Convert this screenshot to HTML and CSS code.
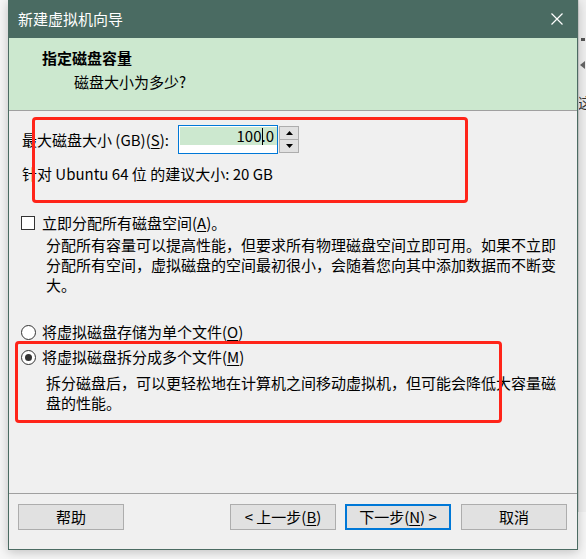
FILE: index.html
```html
<!DOCTYPE html>
<html lang="zh-CN">
<head>
<meta charset="utf-8">
<title>新建虚拟机向导</title>
<link rel="stylesheet" href="styles.css">
</head>
<body>
<div class="desk">
  <div class="bgwin">
    <span class="bg-dash"></span>
    <span class="bg-arrow"></span>
    <span class="bg-char">这</span>
  </div>
  <div class="window">
    <div class="titlebar">
      <span class="title">新建虚拟机向导</span>
      <svg class="close" width="12" height="12" viewBox="0 0 12 12"><path d="M0.5 0.5 L11.5 11.5 M11.5 0.5 L0.5 11.5" stroke="#ffffff" stroke-width="1.2" fill="none"/></svg>
    </div>
    <div class="header">
      <div class="h-title">指定磁盘容量</div>
      <div class="h-sub">磁盘大小为多少?</div>
    </div>
    <div class="content">
      <div class="size-row">
        <span class="size-label">最大磁盘大小 (GB)(<u>S</u>):</span>
        <div class="field"><span class="sel">100<i class="caret"></i>.0</span></div>
        <div class="spinner">
          <span class="spin-btn"><svg width="7" height="4" viewBox="0 0 7 4"><path d="M3.5 0 L7 4 L0 4 Z" fill="#000"/></svg></span>
          <span class="spin-btn"><svg width="7" height="4" viewBox="0 0 7 4"><path d="M0 0 L7 0 L3.5 4 Z" fill="#000"/></svg></span>
        </div>
      </div>
      <div class="rec">针对 Ubuntu 64 位 的建议大小: 20 GB</div>
      <div class="check-row"><span class="checkbox"></span><span>立即分配所有磁盘空间(<u>A</u>)。</span></div>
      <div class="desc desc1">分配所有容量可以提高性能，但要求所有物理磁盘空间立即可用。如果不立即<br>分配所有空间，虚拟磁盘的空间最初很小，会随着您向其中添加数据而不断变<br>大。</div>
      <div class="radio-row radio1"><span class="radio"></span><span>将虚拟磁盘存储为单个文件(<u>O</u>)</span></div>
      <div class="radio-row radio2"><span class="radio checked"></span><span>将虚拟磁盘拆分成多个文件(<u>M</u>)</span></div>
      <div class="desc desc2">拆分磁盘后，可以更轻松地在计算机之间移动虚拟机，但可能会降低大容量磁<br>盘的性能。</div>
      <div class="mark mark1"></div>
      <div class="mark mark2"></div>
    </div>
    <div class="footer">
      <span class="btn">帮助</span>
      <span class="btn btn-back">&lt; 上一步(<u>B</u>)</span>
      <span class="btn btn-next">下一步(<u>N</u>) &gt;</span>
      <span class="btn btn-cancel">取消</span>
    </div>
  </div>
</div>
</body>
</html>
```

FILE: styles.css
```css
html, body {
  margin: 0;
  padding: 0;
}
body {
  background: #f6f6f6;
  font-family: "Noto Sans CJK SC", "Noto Sans", sans-serif;
  font-size: 15px;
  color: #000;
  width: 586px;
  height: 559px;
  overflow: hidden;
}
.desk {
  position: relative;
  width: 586px;
  height: 559px;
}
.bgwin {
  position: absolute;
  left: 578px;
  top: 0;
  width: 30px;
  height: 512px;
  background: #efefef;
  border-left: 1px solid #d6d6d6;
  overflow: hidden;
}
.bgwin::before {
  content: "";
  position: absolute;
  left: 7px;
  top: 0;
  width: 1px;
  height: 512px;
  background: #c8c8c8;
}
.bg-dash {
  position: absolute;
  left: 2px;
  top: 38px;
  width: 4px;
  height: 3px;
  background: #555;
}
.bg-arrow {
  position: absolute;
  left: 1px;
  top: 61px;
  width: 0;
  height: 0;
  border-top: 4px solid transparent;
  border-bottom: 4px solid transparent;
  border-right: 5px solid #666;
}
.bg-char {
  position: absolute;
  left: -1px;
  top: 93px;
  font-size: 14px;
  line-height: 18px;
  color: #333;
}
.window {
  position: relative;
  margin-left: 8px;
  width: 570px;
  height: 550px;
  box-sizing: border-box;
  border: 1px solid #4b6b62;
  border-top: none;
  background: #f0f0f0;
  display: flex;
  flex-direction: column;
  box-shadow: 0 2px 10px rgba(0, 0, 0, 0.22);
}
.titlebar {
  height: 38px;
  background: #4a6b62;
  display: flex;
  align-items: center;
  padding: 0 14px 0 9px;
  flex-shrink: 0;
}
.title {
  color: #fff;
  font-size: 15px;
  line-height: 20px;
  flex: 1;
}
.close {
  display: block;
  margin-top: -1px;
}
.header {
  height: 62px;
  background: #cce8cf;
  border-bottom: 1px solid #a0a0a0;
  flex-shrink: 0;
  padding: 10px 0 0 33px;
  box-sizing: content-box;
}
.h-title {
  font-weight: bold;
  line-height: 20px;
}
.h-sub {
  line-height: 20px;
  margin-top: 4px;
  padding-left: 32px;
}
.content {
  position: relative;
  flex: 1;
  padding: 14px 0 0 13px;
  display: flex;
  flex-direction: column;
  align-items: flex-start;
}
.size-row {
  display: flex;
  align-items: center;
  height: 29px;
}
.size-label {
  width: 156px;
  line-height: 20px;
  flex-shrink: 0;
}
u {
  text-decoration: underline;
  text-underline-offset: 2px;
}
.field {
  width: 100px;
  height: 29px;
  box-sizing: border-box;
  border: 1px solid #0078d7;
  background: #fff;
  padding: 1px 0 0 1px;
}
.sel {
  display: block;
  width: 97px;
  height: 18px;
  background: #cce8cf;
  text-align: right;
  line-height: 18px;
  padding-right: 3px;
  box-sizing: border-box;
}
.caret {
  display: inline-block;
  width: 1px;
  height: 17px;
  background: #000;
  vertical-align: -3px;
  margin: 0 -1px 0 0;
}
.spinner {
  display: flex;
  flex-direction: column;
  width: 20px;
  height: 27px;
  margin-left: 1px;
}
.spin-btn {
  flex: 1;
  background: #e1e1e1;
  border: 1px solid #adadad;
  display: flex;
  align-items: center;
  justify-content: center;
}
.spin-btn + .spin-btn {
  border-top: none;
}
.spin-btn svg {
  display: block;
}
.rec {
  line-height: 20px;
  margin-top: 10px;
}
.check-row {
  display: flex;
  align-items: center;
  line-height: 20px;
  margin-top: 29px;
  margin-left: -1px;
}
.checkbox {
  width: 14px;
  height: 14px;
  box-sizing: border-box;
  border: 1px solid #333;
  background: #fff;
  margin-right: 7px;
}
.desc {
  line-height: 20px;
  white-space: nowrap;
  padding-left: 24px;
}
.desc1 {
  margin-top: 2px;
}
.radio-row {
  display: flex;
  align-items: center;
  line-height: 20px;
  margin-left: -1px;
}
.radio1 {
  margin-top: 27px;
}
.radio2 {
  margin-top: 5px;
}
.radio {
  width: 15px;
  height: 15px;
  box-sizing: border-box;
  border: 1px solid #333;
  border-radius: 50%;
  background: #fff;
  margin-right: 6px;
  position: relative;
}
.radio.checked::after {
  content: "";
  position: absolute;
  left: 3px;
  top: 3px;
  width: 7px;
  height: 7px;
  border-radius: 50%;
  background: #333;
}
.desc2 {
  margin-top: 6px;
}
.mark {
  position: absolute;
  border: 3px solid #ff2419;
  border-radius: 4px;
  box-sizing: border-box;
}
.mark1 {
  left: 23px;
  top: 6px;
  width: 436px;
  height: 86px;
}
.mark2 {
  left: 6px;
  top: 230px;
  width: 487px;
  height: 82px;
}
.footer {
  flex-shrink: 0;
  height: 45px;
  border-top: 1px solid #a0a0a0;
  display: flex;
  align-items: flex-start;
  padding: 10px 10px 0 9px;
  box-sizing: content-box;
}
.btn {
  width: 106px;
  height: 26px;
  box-sizing: border-box;
  border: 1px solid #adadad;
  background: #e1e1e1;
  display: flex;
  align-items: center;
  justify-content: center;
  line-height: 20px;
}
.btn-back {
  margin-left: auto;
}
.btn-next {
  margin-left: 9px;
  border: 2px solid #0078d7;
}
.btn-cancel {
  margin-left: 10px;
}
```
